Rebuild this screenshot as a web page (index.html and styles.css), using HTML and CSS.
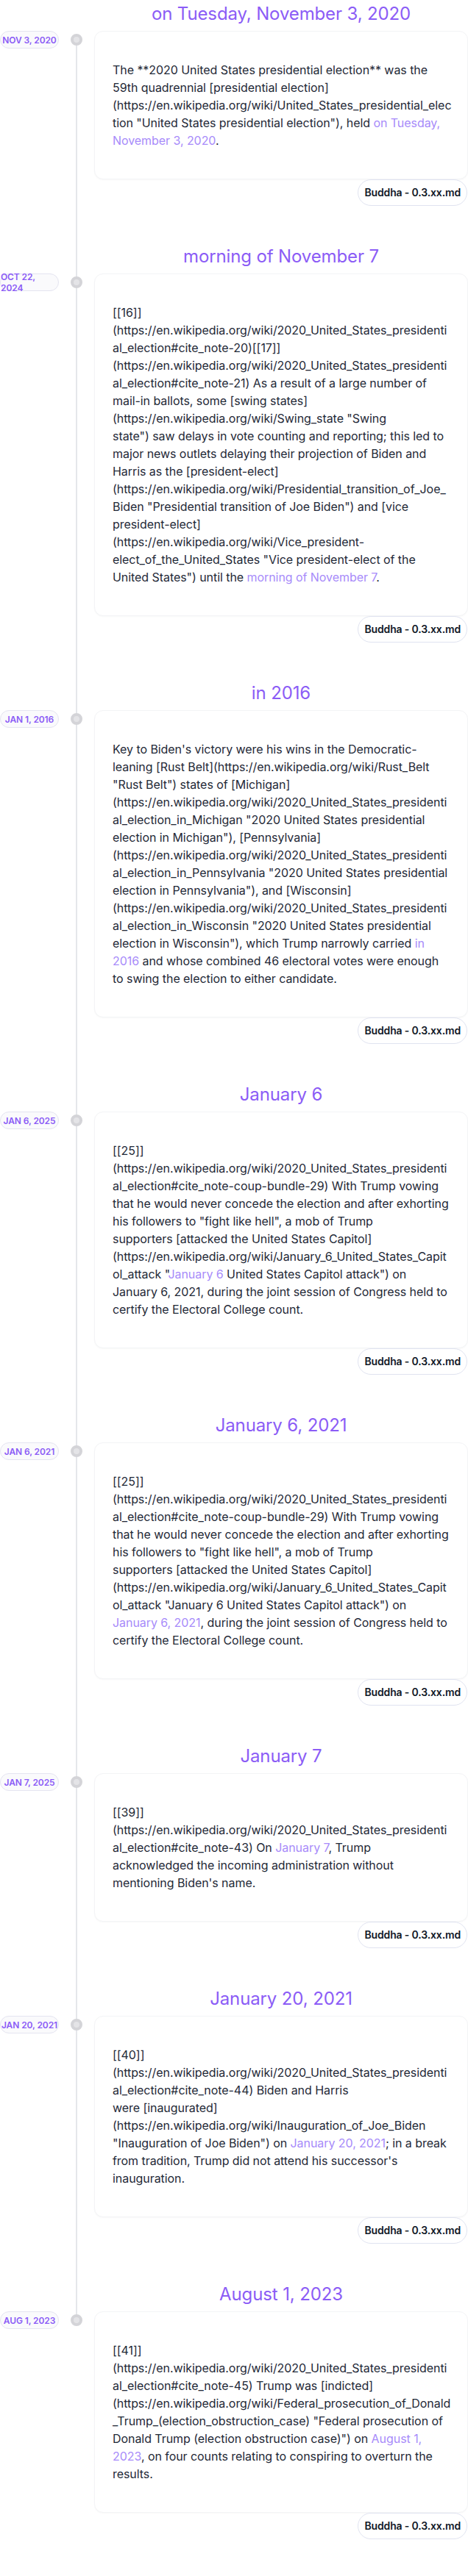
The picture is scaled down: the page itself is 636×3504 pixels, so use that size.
FILE: index.html
```html
<!DOCTYPE html>
<html lang="en">
<head>
<meta charset="utf-8">
<title>Timeline</title>
<link rel="stylesheet" href="styles.css">
</head>
<body>
<main class="timeline">

  <section class="entry">
    <h2 class="entry-title">on Tuesday, November 3, 2020</h2>
    <div class="date-pill">NOV 3, 2020</div>
    <span class="dot"></span>
    <div class="card"><p>The **2020 United States presidential election** was the 59th quadrennial [presidential election](https://en.wikipedia.org/wiki/United_States_presidential_election "United States presidential election"), held <span class="hl">on Tuesday, November 3, 2020</span>.</p></div>
    <div class="badge">Buddha - 0.3.xx.md</div>
  </section>

  <section class="entry">
    <h2 class="entry-title">morning of November 7</h2>
    <div class="date-pill">OCT 22, 2024</div>
    <span class="dot"></span>
    <div class="card"><p>[[16]](https://en.wikipedia.org/wiki/2020_United_States_presidential_election#cite_note-20)[[17]](https://en.wikipedia.org/wiki/2020_United_States_presidential_election#cite_note-21) As a result of a large number of mail-in ballots, some [swing states](https://en.wikipedia.org/wiki/Swing_state "Swing state")&nbsp;saw&nbsp;delays in vote counting and reporting; this led to major news outlets delaying their projection of Biden and Harris as the [president-elect](https://en.wikipedia.org/wiki/Presidential_transition_of_Joe_Biden "Presidential transition of Joe Biden") and [vice president-elect](https://en.wikipedia.org/wiki/Vice_president-elect_of_the_United_States "Vice president-elect of the United States") until the <span class="hl">morning of November 7</span>.</p></div>
    <div class="badge">Buddha - 0.3.xx.md</div>
  </section>

  <section class="entry">
    <h2 class="entry-title">in 2016</h2>
    <div class="date-pill">JAN 1, 2016</div>
    <span class="dot"></span>
    <div class="card"><p>Key to Biden's victory were his wins in the Democratic-leaning [Rust Belt](https://en.wikipedia.org/wiki/Rust_Belt "Rust Belt") states of [Michigan](https://en.wikipedia.org/wiki/2020_United_States_presidential_election_in_Michigan "2020 United States presidential election in Michigan"), [Pennsylvania](https://en.wikipedia.org/wiki/2020_United_States_presidential_election_in_Pennsylvania "2020 United States presidential election in Pennsylvania"), and [Wisconsin](https://en.wikipedia.org/wiki/2020_United_States_presidential_election_in_Wisconsin "2020 United States presidential election in Wisconsin"), which Trump narrowly carried <span class="hl">in 2016</span> and whose combined 46 electoral votes were enough to swing the election to either candidate.</p></div>
    <div class="badge">Buddha - 0.3.xx.md</div>
  </section>

  <section class="entry">
    <h2 class="entry-title">January 6</h2>
    <div class="date-pill">JAN 6, 2025</div>
    <span class="dot"></span>
    <div class="card"><p>[[25]](https://en.wikipedia.org/wiki/2020_United_States_presidential_election#cite_note-coup-bundle-29) With Trump vowing that he would never concede the election and after exhorting his followers to "fight like hell", a mob of Trump supporters&nbsp;[attacked the United States Capitol](https://en.wikipedia.org/wiki/January_6_United_States_Capitol_attack "<span class="hl">January 6</span> United States Capitol attack") on January 6, 2021, during the joint session of Congress held to certify the Electoral College count.</p></div>
    <div class="badge">Buddha - 0.3.xx.md</div>
  </section>

  <section class="entry">
    <h2 class="entry-title">January 6, 2021</h2>
    <div class="date-pill">JAN 6, 2021</div>
    <span class="dot"></span>
    <div class="card"><p>[[25]](https://en.wikipedia.org/wiki/2020_United_States_presidential_election#cite_note-coup-bundle-29) With Trump vowing that he would never concede the election and after exhorting his followers to "fight like hell", a mob of Trump supporters&nbsp;[attacked the United States Capitol](https://en.wikipedia.org/wiki/January_6_United_States_Capitol_attack "January 6 United States Capitol attack") on <span class="hl">January 6, 2021</span>, during the joint session of Congress held to certify the Electoral College count.</p></div>
    <div class="badge">Buddha - 0.3.xx.md</div>
  </section>

  <section class="entry">
    <h2 class="entry-title">January 7</h2>
    <div class="date-pill">JAN 7, 2025</div>
    <span class="dot"></span>
    <div class="card"><p>[[39]](https://en.wikipedia.org/wiki/2020_United_States_presidential_election#cite_note-43) On <span class="hl">January 7</span>, Trump acknowledged the incoming administration without mentioning Biden's name.</p></div>
    <div class="badge">Buddha - 0.3.xx.md</div>
  </section>

  <section class="entry">
    <h2 class="entry-title">January 20, 2021</h2>
    <div class="date-pill">JAN 20, 2021</div>
    <span class="dot"></span>
    <div class="card"><p>[[40]](https://en.wikipedia.org/wiki/2020_United_States_presidential_election#cite_note-44) Biden and Harris were&nbsp;[inaugurated](https://en.wikipedia.org/wiki/Inauguration_of_Joe_Biden "Inauguration of Joe Biden") on <span class="hl">January 20, 2021</span>; in a break from tradition, Trump did not attend his successor's inauguration.</p></div>
    <div class="badge">Buddha - 0.3.xx.md</div>
  </section>

  <section class="entry">
    <h2 class="entry-title">August 1, 2023</h2>
    <div class="date-pill">AUG 1, 2023</div>
    <span class="dot"></span>
    <div class="card"><p>[[41]](https://en.wikipedia.org/wiki/2020_United_States_presidential_election#cite_note-45) Trump was [indicted](https://en.wikipedia.org/wiki/Federal_prosecution_of_Donald_Trump_(election_obstruction_case) "Federal prosecution of Donald Trump (election obstruction case)") on <span class="hl">August 1, 2023</span>, on four counts relating to conspiring to overturn the results.</p></div>
    <div class="badge">Buddha - 0.3.xx.md</div>
  </section>

</main>
</body>
</html>
```

FILE: styles.css
```css
* {
  box-sizing: border-box;
}

html,
body {
  margin: 0;
  padding: 0;
  background: #ffffff;
}

body {
  font-family: Inter, "Noto Sans", "Liberation Sans", sans-serif;
  color: #1f2937;
}

.timeline {
  width: 636px;
  padding-top: 3px;
}

.entry {
  position: relative;
  display: grid;
  grid-template-columns: 80px 48px minmax(0, 1fr);
  grid-template-rows: auto auto auto;
  padding-bottom: 53px;
}

/* connector from this entry's dot to the next entry's dot */
.entry::before {
  content: "";
  position: absolute;
  left: 103px;
  width: 2px;
  top: 51px;
  bottom: -51px;
  background: #e5e7eb;
  z-index: 0;
}

.entry:last-child::before {
  display: none;
}

.entry-title {
  grid-column: 3;
  grid-row: 1;
  margin: 0 0 7px;
  font-size: 24px;
  line-height: 32px;
  font-weight: 400;
  letter-spacing: -0.13px;
  color: #8b5cf6;
  text-align: center;
}

.date-pill {
  grid-column: 1;
  grid-row: 2;
  align-self: start;
  display: flex;
  align-items: center;
  justify-content: center;
  width: 80px;
  height: 24px;
  padding: 0;
  border: 1px solid #e4e4f0;
  border-radius: 12px;
  background: #fafafc;
  color: #8b5cf6;
  font-size: 12px;
  line-height: 15px;
  font-weight: 600;
  letter-spacing: -0.1px;
  text-align: left;
}

.dot {
  grid-column: 2;
  grid-row: 2;
  justify-self: center;
  align-self: start;
  position: relative;
  z-index: 1;
  width: 16px;
  height: 16px;
  margin-top: 4px;
  border-radius: 50%;
  border: 4px solid #d4d4d8;
  background: #e4e4e7;
}

.card {
  grid-column: 3;
  grid-row: 2;
  min-width: 0;
  padding: 40px 21.5px 40px 24px;
  border: 1px solid #f3f4f6;
  border-radius: 12px;
  background: #ffffff;
  box-shadow: 0 1px 2px rgba(0, 0, 0, 0.03);
}

.card p {
  margin: 0;
  font-size: 16px;
  line-height: 24px;
  letter-spacing: -0.06px;
  color: #1f2937;
  overflow-wrap: break-word;
}

.hl {
  color: #a78bfa;
}

.badge {
  grid-column: 3;
  grid-row: 3;
  justify-self: end;
  margin-right: 1px;
  padding: 7px 8px;
  border: 1px solid #e0e3f0;
  border-radius: 18px;
  background: #ffffff;
  font-size: 14px;
  line-height: 20px;
  font-weight: 600;
  letter-spacing: -0.15px;
  color: #111827;
}
```
